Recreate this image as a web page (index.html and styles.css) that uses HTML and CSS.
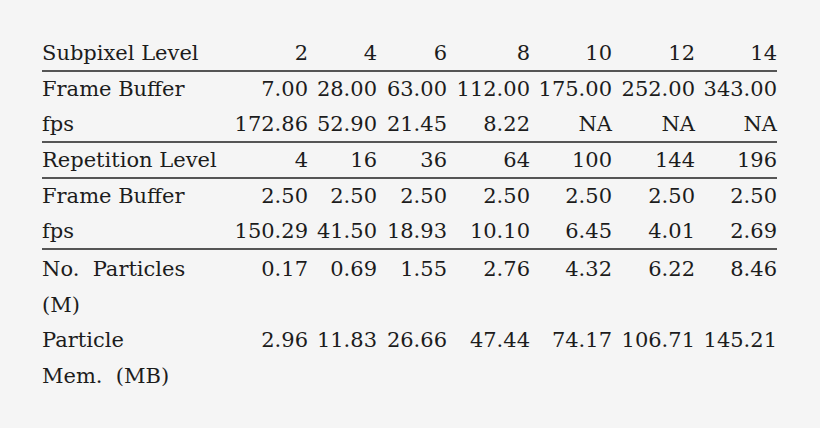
FILE: index.html
```html
<!DOCTYPE html>
<html lang="en">
  <head>
    <meta charset="UTF-8" />
    <meta name="viewport" content="width=device-width, initial-scale=1.0" />
    <title>Subpixel and Repetition Levels</title>
    <link rel="stylesheet" href="styles.css">
  </head>
  <body>
    <table class="results">
      <colgroup>
        <col class="col-label" />
        <col class="col-a" />
        <col class="col-b" />
        <col class="col-c" />
        <col class="col-d" />
        <col class="col-e" />
        <col class="col-f" />
        <col class="col-g" />
      </colgroup>
      <tbody>
        <tr class="rule">
          <td>Subpixel Level</td>
          <td>2</td><td>4</td><td>6</td><td>8</td><td>10</td><td>12</td><td>14</td>
        </tr>
        <tr>
          <td>Frame Buffer</td>
          <td>7.00</td><td>28.00</td><td>63.00</td><td>112.00</td><td>175.00</td><td>252.00</td><td>343.00</td>
        </tr>
        <tr class="rule">
          <td>fps</td>
          <td>172.86</td><td>52.90</td><td>21.45</td><td>8.22</td><td>NA</td><td>NA</td><td>NA</td>
        </tr>
        <tr class="rule">
          <td>Repetition Level</td>
          <td>4</td><td>16</td><td>36</td><td>64</td><td>100</td><td>144</td><td>196</td>
        </tr>
        <tr>
          <td>Frame Buffer</td>
          <td>2.50</td><td>2.50</td><td>2.50</td><td>2.50</td><td>2.50</td><td>2.50</td><td>2.50</td>
        </tr>
        <tr class="rule">
          <td>fps</td>
          <td>150.29</td><td>41.50</td><td>18.93</td><td>10.10</td><td>6.45</td><td>4.01</td><td>2.69</td>
        </tr>
        <tr class="tall">
          <td>No.&nbsp; Particles<br />(M)</td>
          <td>0.17</td><td>0.69</td><td>1.55</td><td>2.76</td><td>4.32</td><td>6.22</td><td>8.46</td>
        </tr>
        <tr class="tall">
          <td>Particle<br />Mem.&nbsp; (MB)</td>
          <td>2.96</td><td>11.83</td><td>26.66</td><td>47.44</td><td>74.17</td><td>106.71</td><td>145.21</td>
        </tr>
      </tbody>
    </table>
  </body>
</html>
```

FILE: styles.css
```css
* {
  margin: 0;
  padding: 0;
  box-sizing: border-box;
}

body {
  font-family: "DejaVu Serif", serif;
  font-size: 21px;
  color: #1c1c1c;
  background: #f5f5f5;
  padding: 36px 42px;
}

.results {
  border-collapse: collapse;
  table-layout: fixed;
  width: 735px;
}

.col-label { width: 190px; }
.col-a { width: 82px; }
.col-b { width: 69px; }
.col-c { width: 70px; }
.col-d { width: 83px; }
.col-e { width: 82px; }
.col-f { width: 83px; }
.col-g { width: 76px; }

.results td {
  line-height: 35px;
  padding: 0 6px 0 0;
  text-align: right;
  vertical-align: top;
  white-space: nowrap;
}

.results td:first-child {
  text-align: left;
}

.results td:last-child {
  padding-right: 0;
}

.results tr.rule td {
  line-height: 34px;
  border-bottom: 2px solid #555;
}

.results tr.tall td {
  line-height: 35.5px;
}

.results tr.rule + tr.tall td {
  padding-top: 2px;
}
```
